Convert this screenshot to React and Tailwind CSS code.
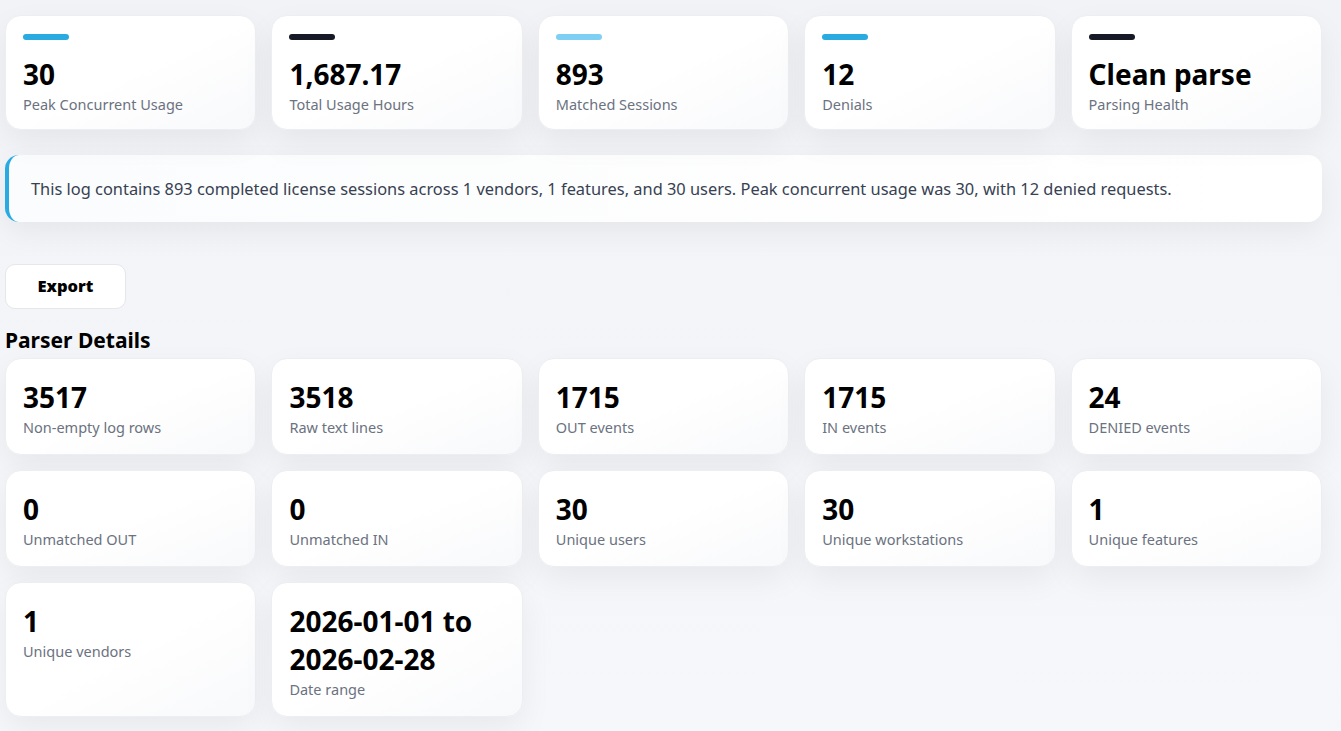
import React from 'react';

const summary = [
  { value: '30', label: 'Peak Concurrent Usage', bar: 'bg-[#29abe2]' },
  { value: '1,687.17', label: 'Total Usage Hours', bar: 'bg-[#161a26]' },
  { value: '893', label: 'Matched Sessions', bar: 'bg-[#7fcff5]' },
  { value: '12', label: 'Denials', bar: 'bg-[#29abe2]' },
  { value: 'Clean parse', label: 'Parsing Health', bar: 'bg-[#161a26]' },
];

const details = [
  { value: '3517', label: 'Non-empty log rows' },
  { value: '3518', label: 'Raw text lines' },
  { value: '1715', label: 'OUT events' },
  { value: '1715', label: 'IN events' },
  { value: '24', label: 'DENIED events' },
  { value: '0', label: 'Unmatched OUT' },
  { value: '0', label: 'Unmatched IN' },
  { value: '30', label: 'Unique users' },
  { value: '30', label: 'Unique workstations' },
  { value: '1', label: 'Unique features' },
  { value: '1', label: 'Unique vendors' },
  { value: '2026-01-01 to 2026-02-28', label: 'Date range' },
];

const cardClass =
  'rounded-[16px] border border-[#eceef2] bg-gradient-to-br from-white via-white to-[#f8f9fb] shadow-[0_12px_32px_rgba(15,23,42,0.06)]';

const StatCard = ({ value, label, bar }) => (
  <div className={`${cardClass} px-[17px] pt-[18px] pb-[15px]`}>
    <div className={`h-[6px] w-[46px] rounded-full ${bar}`} />
    <div className="mt-[17px] text-[28px] font-bold leading-[34px] text-black">{value}</div>
    <div className="mt-[3px] text-[14.5px] leading-[20px] text-[#6b7280]">{label}</div>
  </div>
);

const DetailCard = ({ value, label }) => (
  <div className={`${cardClass} px-[17px] pt-[19px] pb-[17px]`}>
    <div className="text-[28px] font-bold leading-[38px] text-black">{value}</div>
    <div className="mt-[1px] text-[14.5px] leading-[20px] text-[#6b7280]">{label}</div>
  </div>
);

export default function App() {
  return (
    <div
      className="min-h-screen bg-gradient-to-b from-[#f1f3f6] to-[#f5f7fa] pl-[5px] pr-[19px] pt-[15px] pb-[15px]"
      style={{ fontFamily: '"Noto Sans", "Open Sans", sans-serif' }}
    >
      {/* Summary cards */}
      <div className="grid grid-cols-5 gap-[15px]">
        {summary.map((s) => (
          <StatCard key={s.label} {...s} />
        ))}
      </div>

      {/* Narrative */}
      <div className="mt-[25px] rounded-[14px] border-l-[4px] border-[#29abe2] bg-gradient-to-r from-[#fbfcfd] to-white px-[22px] py-[21px] shadow-[0_10px_28px_rgba(15,23,42,0.06)]">
        <p className="text-[16.4px] leading-[25px] text-[#374151]">
          This log contains 893 completed license sessions across 1 vendors, 1 features, and 30 users. Peak concurrent usage was 30, with 12 denied requests.
        </p>
      </div>

      {/* Export */}
      <div className="mt-[42px]">
        <button className="h-[45px] w-[121px] rounded-[10px] border border-[#e5e7eb] bg-white text-[16.5px] font-black text-black">
          Export
        </button>
      </div>

      <h2 className="mt-[17px] text-[21px] font-bold leading-[28px] text-black">Parser Details</h2>

      <div className="mt-[4px] grid grid-cols-5 gap-[15px]">
        {details.map((d) => (
          <DetailCard key={d.label} {...d} />
        ))}
      </div>
    </div>
  );
}
